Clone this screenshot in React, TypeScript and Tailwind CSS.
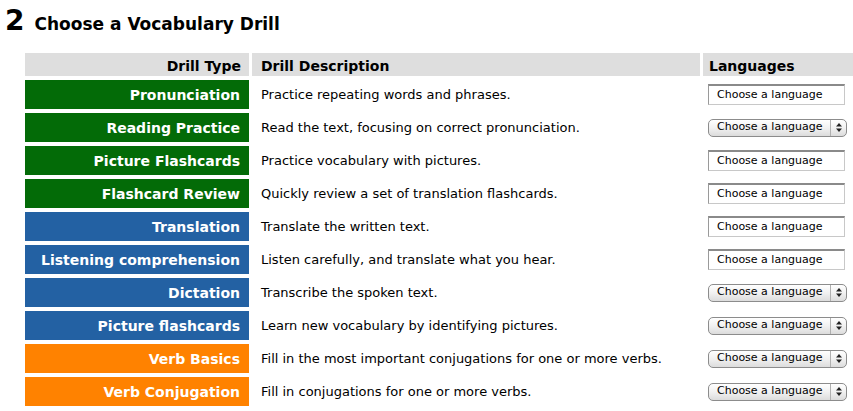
const drills = [
  { name: "Pronunciation", desc: "Practice repeating words and phrases.", color: "bg-[#036b07]", kind: "input" },
  { name: "Reading Practice", desc: "Read the text, focusing on correct pronunciation.", color: "bg-[#036b07]", kind: "select" },
  { name: "Picture Flashcards", desc: "Practice vocabulary with pictures.", color: "bg-[#036b07]", kind: "input" },
  { name: "Flashcard Review", desc: "Quickly review a set of translation flashcards.", color: "bg-[#036b07]", kind: "input" },
  { name: "Translation", desc: "Translate the written text.", color: "bg-[#2361a3]", kind: "input" },
  { name: "Listening comprehension", desc: "Listen carefully, and translate what you hear.", color: "bg-[#2361a3]", kind: "input" },
  { name: "Dictation", desc: "Transcribe the spoken text.", color: "bg-[#2361a3]", kind: "select" },
  { name: "Picture flashcards", desc: "Learn new vocabulary by identifying pictures.", color: "bg-[#2361a3]", kind: "select" },
  { name: "Verb Basics", desc: "Fill in the most important conjugations for one or more verbs.", color: "bg-[#ff8200]", kind: "select" },
  { name: "Verb Conjugation", desc: "Fill in conjugations for one or more verbs.", color: "bg-[#ff8200]", kind: "select" },
];

function LangInput() {
  return (
    <div className="ml-[5px] w-[137px] h-[21px] bg-white border border-[#c8c8c8] border-t-2 border-t-[#8a8a8a] border-l-[#9a9a9a] pl-[8px] flex items-center text-[11px] text-black">
      Choose a language
    </div>
  );
}

function LangSelect() {
  return (
    <div className="ml-[5px] w-[139px] h-[18px] rounded-[5px] border border-[#8c8c8c] bg-gradient-to-b from-white via-[#f1f1f1] to-[#dcdcdc] flex items-center text-[11px] text-black">
      <span className="flex-1 pl-[8px]">Choose a language</span>
      <span className="w-[16px] h-full border-l border-[#b0b0b0] flex flex-col items-center justify-center">
        <svg width="6" height="9" viewBox="0 0 6 9">
          <path d="M3 0 L6 3.5 L0 3.5 Z" fill="#222" />
          <path d="M3 9 L6 5.5 L0 5.5 Z" fill="#222" />
        </svg>
      </span>
    </div>
  );
}

export default function App() {
  return (
    <div className="w-[853px] h-[411px] overflow-hidden bg-white text-black" style={{ fontFamily: '"DejaVu Sans", Verdana, sans-serif' }}>
      <div className="flex items-baseline pl-[5px] pt-[5px] h-[53px]">
        <span className="text-[28px] font-bold leading-[32px]">2</span>
        <span className="ml-[10px] text-[17px] font-bold">Choose a Vocabulary Drill</span>
      </div>
      <div className="ml-[25px] grid grid-cols-[224px_448px_150px] gap-x-[3px] gap-y-[4px]">
        <div className="h-[23px] bg-[#dedede] flex items-center justify-end pr-[8px] pt-[3px] text-[14px] font-bold">Drill Type</div>
        <div className="h-[23px] bg-[#dedede] flex items-center pl-[9px] pt-[3px] text-[14px] font-bold">Drill Description</div>
        <div className="h-[23px] bg-[#dedede] flex items-center pl-[6px] pt-[3px] text-[14px] font-bold">Languages</div>
        {drills.map((d) => (
          <div key={d.name} className="contents">
            <div className={`h-[29px] ${d.color} flex items-center justify-end pr-[9px] pt-[1px] text-[14px] font-bold text-white`}>{d.name}</div>
            <div className="h-[29px] flex items-center pl-[9px] pt-[1px] text-[13px]">{d.desc}</div>
            <div className="h-[29px] flex items-center">{d.kind === "input" ? <LangInput /> : <LangSelect />}</div>
          </div>
        ))}
      </div>
    </div>
  );
}
